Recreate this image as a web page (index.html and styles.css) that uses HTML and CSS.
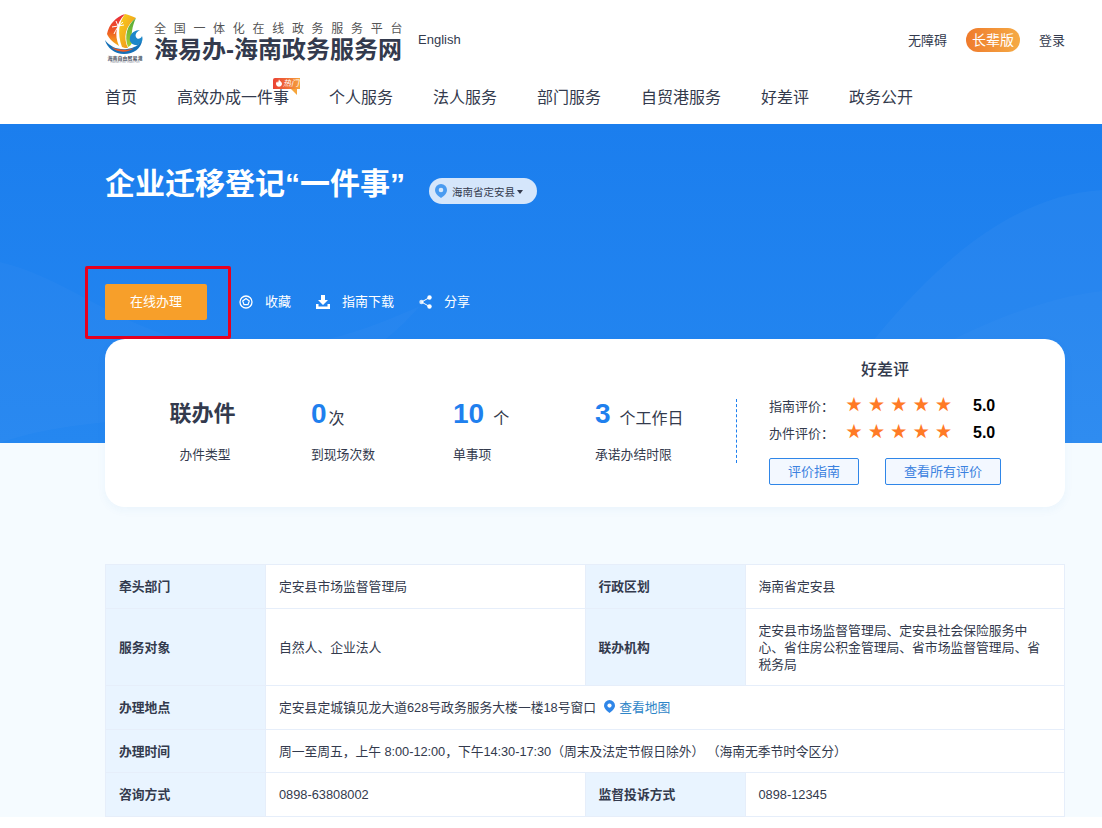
FILE: index.html
```html
<!DOCTYPE html>
<html lang="zh-CN">
<head>
    <meta charset="UTF-8">
    <meta name="viewport" content="width=device-width, initial-scale=1.0">
    <title>企业迁移登记“一件事”</title>
    <link rel="stylesheet" href="styles.css">
</head>
<body>
    <header class="header">
        <div class="wrap top-bar">
            <div class="brand">
                <svg class="logo" width="40" height="50" viewBox="0 0 40 50">
                    <defs>
                        <linearGradient id="sailLeft" x1="0" y1="0" x2="0" y2="1">
                            <stop offset="0" stop-color="#e8283a"/>
                            <stop offset=".55" stop-color="#ee5a24"/>
                            <stop offset="1" stop-color="#f7b21a"/>
                        </linearGradient>
                        <linearGradient id="sailMid" x1="0" y1="0" x2="1" y2="1">
                            <stop offset="0" stop-color="#f7d21c"/>
                            <stop offset="1" stop-color="#f08a1d"/>
                        </linearGradient>
                        <linearGradient id="sailRight" x1="0" y1="0" x2="0" y2="1">
                            <stop offset="0" stop-color="#4fa83d"/>
                            <stop offset="1" stop-color="#a6cf2f"/>
                        </linearGradient>
                    </defs>
                    <path d="M20 1C11 4 4 11 2 21c2 5 7 9 12 12C9 22 11 10 20 1z" fill="url(#sailLeft)"/>
                    <path d="M20 1c-6 8-8 19-3 33 2 1 4 1 6 1C18 25 20 13 31 5 27 3 24 2 20 1z" fill="url(#sailMid)"/>
                    <path d="M31 5C22 12 19 23 23 34c2-1 3-2 4-4-1-8 0-17 4-25z" fill="url(#sailRight)"/>
                    <path d="M9 21c2-5 5-9 9-12M13 13l-6 1M13 13l-2-5M13 13l6-1" fill="none" stroke="#fff" stroke-width="1"/>
                    <path d="M30 32c-4-1-6-4-5-8 1-4 5-7 10-7-4 2-5 5-4 7 1 3 5 2 6-1 2 5-2 10-7 9z" fill="#1d87c9"/>
                    <path d="M0 27c5 7 13 10 22 9 7-1 12-4 15-8-1 7-8 13-18 13C10 41 2 35 0 27z" fill="#1470b8"/>
                    <path d="M6 34c7 3 16 4 23 1-6 5-17 5-23-1z" fill="#ee5a24"/>
                    <text class="logo-cn" x="20" y="47" text-anchor="middle">海南自由贸易港</text>
                    <text class="logo-en" x="20" y="50" text-anchor="middle">Hainan Free Trade Port</text>
                </svg>
                <div class="brand-text">
                    <div class="brand-sub">全国一体化在线政务服务平台</div>
                    <div class="brand-name">海易办-海南政务服务网</div>
                </div>
                <a class="lang">English</a>
            </div>
            <div class="top-links">
                <a>无障碍</a>
                <a class="elder">长辈版</a>
                <a>登录</a>
            </div>
        </div>
        <nav class="wrap nav">
            <a>首页</a>
            <a class="hot">高效办成一件事<span class="hot-tag"><svg width="6" height="8" viewBox="0 0 7 9"><path d="M3.500 0c.5 2 3.500 3 3.500 5.500S5 9 3.500 9 0 8 0 5.500C0 4 1 3 1.500 2.500c0 1 .5 1.500 1 1.500C3 3 3 1.500 3.500 0z" fill="#fff"/></svg><em>热门</em></span></a>
            <a>个人服务</a>
            <a>法人服务</a>
            <a>部门服务</a>
            <a>自贸港服务</a>
            <a>好差评</a>
            <a>政务公开</a>
        </nav>
    </header>

    <section class="hero">
        <svg class="hero-swirl" width="1102" height="319" viewBox="0 0 1102 319" fill="none">
            <path d="M0 138c60 14 100 52 170 74 90 28 170 6 250-30-60 70-150 100-250 110-60 6-120 9-170 27z" fill="#fff" opacity=".025"/>
            <path d="M1102 66c-110 6-210 110-302 253h302z" fill="#fff" opacity=".03"/>
            <path d="M1102 167c-90 10-210 70-300 152h300z" fill="#fff" opacity=".02"/>
        </svg>
        <div class="wrap hero-inner">
            <div class="title-row">
                <h1>企业迁移登记“一件事”</h1>
                <div class="region">
                    <svg class="pin" width="12" height="14" viewBox="0 0 12 14">
                        <path d="M6 0a6 6 0 0 1 6 6c0 3.500-3.500 6.500-6 8-2.500-1.500-6-4.500-6-8a6 6 0 0 1 6-6z" fill="#4a9bf0"/>
                        <circle cx="6" cy="6" r="2.300" fill="#d7e8fb"/>
                    </svg>
                    <span>海南省定安县</span>
                    <span class="caret"></span>
                </div>
            </div>
            <div class="action-row">
                <a class="btn-apply">在线办理</a>
                <a class="action">
                    <svg width="14" height="14" viewBox="0 0 14 14" fill="none" stroke="#fff">
                        <circle cx="7" cy="7" r="6" stroke-width="1.300"/>
                        <path d="M7 3.500l3.300 2.400-1.300 3.800H5L3.700 5.900z" stroke-width="1.200"/>
                    </svg>
                    <span>收藏</span>
                </a>
                <a class="action">
                    <svg width="14" height="14" viewBox="0 0 14 14" fill="#fff">
                        <path d="M5 0h4v5h3L7 10 2 5h3z"/>
                        <path d="M0 9h2.500v2.500h9V9H14v5H0z"/>
                    </svg>
                    <span>指南下载</span>
                </a>
                <a class="action">
                    <svg width="13" height="14" viewBox="0 0 13 14" fill="#fff" stroke="#fff">
                        <path d="M10.500 2.500L2.500 7l8 4.500" fill="none"/>
                        <circle cx="2.500" cy="7" r="2.200" stroke="none" opacity=".8"/>
                        <circle cx="10.500" cy="2.500" r="2.200" stroke="none"/>
                        <circle cx="10.500" cy="11.500" r="2.200" stroke="none"/>
                    </svg>
                    <span>分享</span>
                </a>
            </div>
            <div class="mark-box"></div>
        </div>
    </section>

    <div class="page-bg">
        <main class="wrap content">
            <section class="summary">
                <div class="stats">
                    <div class="stat stat-type">
                        <div class="stat-value"><b class="dark">联办件</b></div>
                        <div class="stat-label">办件类型</div>
                    </div>
                    <div class="stat stat-visits">
                        <div class="stat-value"><b>0</b><span class="unit-tight">次</span></div>
                        <div class="stat-label">到现场次数</div>
                    </div>
                    <div class="stat stat-items">
                        <div class="stat-value"><b>10</b><span>个</span></div>
                        <div class="stat-label">单事项</div>
                    </div>
                    <div class="stat stat-days">
                        <div class="stat-value"><b>3</b><span>个工作日</span></div>
                        <div class="stat-label">承诺办结时限</div>
                    </div>
                </div>
                <div class="rating">
                    <h2>好差评</h2>
                    <div class="rating-row">
                        <span class="rating-name">指南评价：</span>
                        <span class="stars">★★★★★</span>
                        <b class="score">5.0</b>
                    </div>
                    <div class="rating-row">
                        <span class="rating-name">办件评价：</span>
                        <span class="stars">★★★★★</span>
                        <b class="score">5.0</b>
                    </div>
                    <div class="rating-btns">
                        <a class="btn-line btn-guide">评价指南</a>
                        <a class="btn-line btn-all">查看所有评价</a>
                    </div>
                </div>
            </section>

            <table class="info">
                <tr class="row-a">
                    <th>牵头部门</th>
                    <td>定安县市场监督管理局</td>
                    <th>行政区划</th>
                    <td>海南省定安县</td>
                </tr>
                <tr class="row-b">
                    <th>服务对象</th>
                    <td>自然人、企业法人</td>
                    <th>联办机构</th>
                    <td>定安县市场监督管理局、定安县社会保险服务中心、省住房公积金管理局、省市场监督管理局、省税务局</td>
                </tr>
                <tr class="row-a">
                    <th>办理地点</th>
                    <td colspan="3">
                        定安县定城镇见龙大道628号政务服务大楼一楼18号窗口
                        <a class="map-link">
                            <svg width="11" height="13" viewBox="0 0 12 14">
                                <path d="M6 0a6 6 0 0 1 6 6c0 3.500-3.500 6.500-6 8-2.500-1.500-6-4.500-6-8a6 6 0 0 1 6-6z" fill="#2f86e8"/>
                                <circle cx="6" cy="6" r="2.300" fill="#fff"/>
                            </svg>
                            查看地图
                        </a>
                    </td>
                </tr>
                <tr class="row-c">
                    <th>办理时间</th>
                    <td colspan="3">周一至周五，上午 8:00-12:00，下午14:30-17:30（周末及法定节假日除外）&thinsp;（海南无季节时令区分）</td>
                </tr>
                <tr class="row-a">
                    <th>咨询方式</th>
                    <td>0898-63808002</td>
                    <th>监督投诉方式</th>
                    <td>0898-12345</td>
                </tr>
            </table>
        </main>
    </div>
</body>
</html>
```

FILE: styles.css
```css
* {
    box-sizing: border-box;
}

body {
    margin: 0;
    padding: 0;
    font-family: "Liberation Sans", "Noto Sans CJK SC", sans-serif;
    font-size: 13px;
    color: #333a4d;
    background: #fff;
}

.wrap {
    width: 960px;
    margin-left: 105px;
}

.header {
    height: 124px;
    background: #fff;
}

.top-bar {
    height: 76px;
    display: flex;
    justify-content: space-between;
}

.brand {
    display: flex;
    padding-top: 13px;
}

.logo {
    flex: none;
}

.logo-cn {
    font-size: 5px;
    font-weight: bold;
    fill: #4a5160;
}

.logo-en {
    font-size: 2.800px;
    fill: #8a909c;
}

.brand-text {
    margin-left: 9px;
    padding-top: 9px;
    width: 250px;
}

.brand-sub {
    font-size: 12px;
    line-height: 14px;
    letter-spacing: 7.700px;
    color: #555;
    white-space: nowrap;
}

.brand-name {
    font-size: 24px;
    line-height: 28px;
    font-weight: bold;
    color: #333a4d;
    white-space: nowrap;
}

.lang {
    margin-left: 14px;
    margin-top: 19px;
    font-size: 13px;
    line-height: 16px;
}

.top-links {
    display: flex;
    align-items: center;
    height: 80px;
    line-height: 16px;
}

.top-links a {
    margin-left: 19px;
    padding-top: 1px;
}

.top-links .elder {
    width: 54px;
    height: 24px;
    padding: 0;
    line-height: 24px;
    text-align: center;
    color: #fff;
    font-size: 14px;
    border-radius: 12px;
    background: linear-gradient(90deg, #ef7a2c, #f5ab45);
}

.nav {
    display: flex;
    gap: 40px;
    font-size: 16px;
    line-height: 44px;
}

.hot {
    position: relative;
}

.hot-tag {
    position: absolute;
    left: 96px;
    top: 2px;
    display: flex;
    align-items: flex-start;
    gap: 1px;
    width: 27px;
    height: 11px;
    padding: 1px 0 0 3px;
    background: linear-gradient(90deg, #ea4335 0%, #ef6a35 50%, #f6a53c 100%);
    border-radius: 2px 0 0 0;
}

.hot-tag::after {
    content: "";
    position: absolute;
    right: 3px;
    top: 11px;
    border-top: 6px solid #f6a53c;
    border-left: 6px solid transparent;
}

.hot-tag em {
    font-size: 8px;
    line-height: 9px;
    color: #fff;
    white-space: nowrap;
}

.hero {
    position: relative;
    height: 319px;
    background: linear-gradient(#1b7eee, #2587f0);
    overflow: hidden;
}

.hero-swirl {
    position: absolute;
    left: 0;
    top: 0;
}

.hero-inner {
    position: relative;
}

.title-row {
    display: flex;
    padding-top: 40px;
}

h1 {
    margin: 0;
    font-size: 30px;
    line-height: 40px;
    font-weight: bold;
    color: #fff;
}

.region {
    display: flex;
    align-items: center;
    height: 26px;
    width: 108px;
    margin-top: 14px;
    margin-left: 24px;
    padding-left: 6px;
    font-size: 10.500px;
    color: #333a4d;
    background: #d5e6fb;
    border-radius: 13px;
}

.pin {
    margin-right: 5px;
}

.caret {
    margin-left: 2px;
    margin-top: 2px;
    border: 3.500px solid transparent;
    border-top: 4px solid #333a4d;
    border-bottom: 0;
}

.action-row {
    display: flex;
    align-items: center;
    margin-top: 80px;
}

.btn-apply {
    width: 102px;
    height: 36px;
    line-height: 36px;
    margin-right: 32px;
    text-align: center;
    color: #fff;
    background: #f79f2a;
    border-radius: 2px;
}

.action {
    display: flex;
    align-items: center;
    gap: 12px;
    margin-right: 25px;
    color: #fff;
}

.action span {
    line-height: 16px;
    padding-bottom: 1px;
}

.mark-box {
    position: absolute;
    left: -20px;
    top: 142px;
    width: 146px;
    height: 73px;
    border: 3px solid #e6001f;
    border-radius: 2px;
}

.page-bg {
    background: #f5fbff;
}

.content {
    position: relative;
    margin-top: -104px;
}

.summary {
    position: relative;
    display: flex;
    height: 168px;
    background: #fff;
    border-radius: 20px;
    box-shadow: 0 3px 10px rgba(40, 110, 200, 0.05);
}

.stats {
    display: flex;
    width: 632px;
    height: 64px;
    margin-top: 60px;
    border-right: 1px dashed #1f80ee;
}

.stat {
    flex: none;
}

.stat-type {
    width: 200px;
    margin-right: 6px;
    text-align: center;
}

.stat-type .stat-value {
    padding-right: 5px;
}

.stat-visits {
    width: 142px;
}

.stat-items {
    width: 142px;
}

.stat-value {
    height: 30px;
    line-height: 30px;
    font-size: 16px;
    white-space: nowrap;
}

.stat-value b {
    font-size: 28px;
    color: #1f80ee;
}

.stat-value span {
    margin-left: 9px;
    vertical-align: -1px;
}

.stat-value .unit-tight {
    margin-left: 2px;
}

.stat-value .dark {
    font-size: 22px;
    color: #333a4d;
}

.stat-label {
    margin-top: 18px;
    font-size: 12.800px;
    line-height: 16px;
}

.rating {
    flex: 1;
    padding-left: 32px;
}

h2 {
    width: 232px;
    margin: 20px 0 0;
    font-size: 16px;
    line-height: 22px;
    font-weight: 500;
    text-align: center;
}

.rating-row {
    display: flex;
    align-items: center;
    height: 27px;
}

.rating-row:first-of-type {
    margin-top: 11px;
}

.rating-name {
    width: 77px;
}

.stars {
    width: 127px;
    padding-bottom: 2px;
    font-size: 16px;
    line-height: 20px;
    letter-spacing: 6.400px;
    color: #ff7a26;
    white-space: nowrap;
}

.score {
    font-size: 16px;
    color: #000;
}

.rating-btns {
    display: flex;
    gap: 26px;
    margin-top: 12px;
}

.btn-line {
    height: 27px;
    line-height: 25px;
    text-align: center;
    color: #3b82e0;
    background: #f3f8ff;
    border: 1px solid #2f86e8;
    border-radius: 2px;
}

.btn-guide {
    width: 90px;
}

.btn-all {
    width: 116px;
}

.info {
    width: 960px;
    margin-top: 57px;
    border-collapse: collapse;
    table-layout: fixed;
    background: #fff;
    font-size: 12.800px;
}

.info th,
.info td {
    border: 1px solid #e6eefa;
    padding: 0 13px;
    line-height: 17px;
    text-align: left;
}

.info th {
    width: 160px;
    background: #e9f4ff;
    font-weight: bold;
}

.row-a {
    height: 44px;
}

.row-b {
    height: 77px;
}

.row-c {
    height: 43px;
    letter-spacing: -0.050px;
}

.map-link {
    color: #2f86c8;
    margin-left: 4px;
}

.map-link svg {
    margin-right: 1px;
    vertical-align: -1px;
}
```
